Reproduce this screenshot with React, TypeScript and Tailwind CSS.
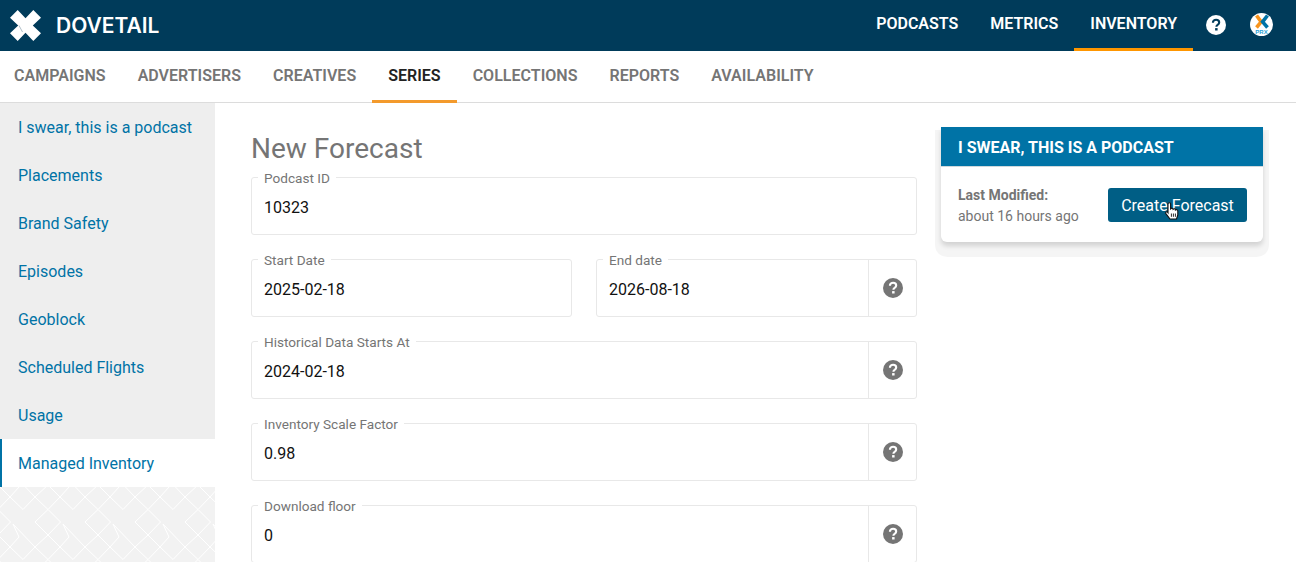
const topLinks = [
  { label: "PODCASTS", active: false },
  { label: "METRICS", active: false },
  { label: "INVENTORY", active: true },
];

const subLinks = ["CAMPAIGNS", "ADVERTISERS", "CREATIVES", "SERIES", "COLLECTIONS", "REPORTS", "AVAILABILITY"];

const sideLinks = [
  "I swear, this is a podcast",
  "Placements",
  "Brand Safety",
  "Episodes",
  "Geoblock",
  "Scheduled Flights",
  "Usage",
  "Managed Inventory",
];

const Logo = () => (
  <svg width="31" height="31" viewBox="0 0 31 31" className="shrink-0">
    <path
      fill="#fff"
      d="M0 7.7 L7.7 0 L15.5 8.2 L23.3 0 L31 7.7 L22.8 15.5 L31 23.3 L23.3 31 L15.5 22.8 L7.7 31 L0 23.3 L8.2 15.5 Z"
    />
    <path stroke="#8fa5b2" strokeWidth="0.7" d="M9 15.5 L12.5 22" fill="none" />
  </svg>
);

const HelpIcon = ({ bg, fg, size }: { bg: string; fg: string; size: number }) => (
  <svg width={size} height={size} viewBox="0 0 20 20">
    <circle cx="10" cy="10" r="10" fill={bg} />
    <path
      d="M6.9 7.7 C6.9 5.8 8.3 4.7 10.1 4.7 C11.9 4.7 13.2 5.8 13.2 7.4 C13.2 8.6 12.5 9.2 11.6 9.8 C10.8 10.3 10.4 10.7 10.4 11.8"
      fill="none"
      stroke={fg}
      strokeWidth="2.1"
    />
    <rect x="9.1" y="13.1" width="2.5" height="2.4" fill={fg} />
  </svg>
);

const PrxAvatar = () => (
  <svg width="23" height="23" viewBox="0 0 23 23">
    <circle cx="11.5" cy="11.5" r="11.5" fill="#fff" />
    <path d="M6.5 2.5 L11.2 8.8 L6.5 14.5" fill="none" stroke="#f7941d" strokeWidth="3.6" />
    <path d="M17.5 2.5 L12.6 8.8 L17.5 14.5" fill="none" stroke="#0073a6" strokeWidth="3.6" />
    <text
      x="11.5"
      y="21"
      textAnchor="middle"
      fontFamily="'Liberation Sans', sans-serif"
      fontWeight="700"
      fontSize="6"
      fill="#2a9fd6"
    >
      PRX
    </text>
  </svg>
);

const HandCursor = () => (
  <svg width="14" height="18" viewBox="0 0 14 18" className="absolute left-[57px] top-[14px]">
    <path
      d="M3 2 C3 0.4 5.6 0.4 5.6 2 L5.6 6.8 C6.6 5.8 7.9 6 8.1 7.3 C9 6.4 10.3 6.7 10.4 8 C11.3 7.3 12.8 7.7 12.8 9 L12.8 13 L11.5 17 L5 17 L0.9 11.6 C0.1 10.4 1.6 9.2 2.6 10.2 L3 10.8 Z"
      fill="#fff"
      stroke="#111"
      strokeWidth="1.1"
    />
    <path d="M6.4 11.5 V14.8 M8.4 11.5 V14.8 M10.4 11.5 V14.8" stroke="#111" strokeWidth="0.9" />
  </svg>
);

// one 50x50 tile of the chain-link texture, drawn again for the parts that wrap
const tileLines =
  "M10 10 L23 22.5 L35 10 L48 22.5 L60 10 M48 22.5 L35 35 L48 48 L60.5 35 Z M48 48 L35 60 M48 48 L60 60 M13 37 L19 50 L10 60 M13 37 L35 60";

const SidePattern = () => (
  <svg className="block h-full w-full" xmlns="http://www.w3.org/2000/svg">
    <defs>
      <pattern id="dove" width="50" height="50" patternUnits="userSpaceOnUse">
        {[
          [0, 0],
          [-50, 0],
          [0, -50],
          [-50, -50],
        ].map(([x, y]) => (
          <path
            key={`${x}${y}`}
            d={tileLines}
            transform={`translate(${x} ${y})`}
            fill="none"
            stroke="#fff"
            strokeWidth="1"
          />
        ))}
      </pattern>
    </defs>
    <rect width="100%" height="100%" fill="url(#dove)" />
  </svg>
);

const Field = ({
  label,
  value,
  help,
  className,
}: {
  label: string;
  value: string;
  help?: boolean;
  className?: string;
}) => (
  <div className={`relative flex h-[58px] rounded-[3px] border border-[#e8e8e8] ${className ?? ""}`}>
    <span className="absolute left-[6px] top-[-9px] bg-white px-[6px] text-[13.6px] leading-[18px] text-[#757575]">
      {label}
    </span>
    <div className="flex flex-1 items-center pl-3 pt-[3px] text-base text-[#111]">{value}</div>
    {help && (
      <div className="flex w-[48px] items-center justify-center border-l border-[#e8e8e8]">
        <HelpIcon bg="#757575" fg="#fff" size={20} />
      </div>
    )}
  </div>
);

export default function App() {
  return (
    <div className="flex h-[562px] flex-col overflow-hidden bg-white font-['Roboto',sans-serif]">
      <header className="flex h-[51px] shrink-0 items-center justify-between bg-[#003b5a] pl-[10px] pr-[23px]">
        <div className="flex items-center gap-[15px]">
          <Logo />
          <span className="font-['Inter',sans-serif] text-[21px] font-semibold text-white">DOVETAIL</span>
        </div>
        <nav className="flex h-full items-center">
          {topLinks.map((link) => (
            <a
              key={link.label}
              className={`flex h-full items-center border-b-[3px] px-4 pb-px text-base font-semibold text-white ${
                link.active ? "border-[#ff9600]" : "border-transparent"
              }`}
            >
              {link.label}
            </a>
          ))}
          <div className="ml-[13px] mr-[24px] -mt-[2px]">
            <HelpIcon bg="#fff" fg="#003b5a" size={20} />
          </div>
          <div className="-mt-[3px] h-[23px]">
            <PrxAvatar />
          </div>
        </nav>
      </header>

      <nav className="flex h-[52px] shrink-0 items-center border-b border-[#dcdcdc] bg-white">
        {subLinks.map((link) => (
          <a
            key={link}
            className={`flex h-full items-center border-b-[3px] px-4 pt-px text-base font-semibold tracking-[0.02px] first:pl-[14px] ${
              link === "SERIES" ? "-mb-px border-[#f39a2c] text-[#222]" : "border-transparent text-[#757575]"
            }`}
          >
            {link}
          </a>
        ))}
      </nav>

      <div className="flex min-h-0 flex-1">
        <aside className="flex w-[215px] shrink-0 flex-col bg-[#f2f2f2]">
          {sideLinks.map((link) =>
            link === "Managed Inventory" ? (
              <a
                key={link}
                className="flex h-12 shrink-0 items-center border-l-2 border-[#0073a6] bg-white pl-4 pt-[2px] text-base text-[#0073a6]"
              >
                {link}
              </a>
            ) : (
              <a
                key={link}
                className="flex h-12 shrink-0 items-center bg-[#eeeeee] pl-[18px] pt-[2px] text-base text-[#0073a6]"
              >
                {link}
              </a>
            ),
          )}
          <div className="min-h-0 flex-1">
            <SidePattern />
          </div>
        </aside>

        <main className="flex min-w-0 flex-1 gap-6 pl-9 pt-6">
          <section className="w-[666px] shrink-0">
            <h1 className="mb-2 pt-[2px] text-[28px] leading-[40px] text-[#757575]">New Forecast</h1>
            <div className="flex flex-col gap-6">
              <Field label="Podcast ID" value="10323" />
              <div className="flex gap-6">
                <Field label="Start Date" value="2025-02-18" className="flex-1" />
                <Field label="End date" value="2026-08-18" help className="flex-1" />
              </div>
              <Field label="Historical Data Starts At" value="2024-02-18" help />
              <Field label="Inventory Scale Factor" value="0.98" help />
              <Field label="Download floor" value="0" help />
            </div>
          </section>

          <aside className="h-[115px] w-[322px] shrink-0 rounded-b-[6px] bg-white shadow-[0_4px_5px_rgba(0,0,0,0.14),0_9px_0_6px_rgba(0,0,0,0.04)]">
            <h2 className="flex h-10 items-center border-b border-[#cfd8dc] bg-[#0073a6] pl-[17px] pt-[3px] text-base font-bold text-white">
              I SWEAR, THIS IS A PODCAST
            </h2>
            <div className="flex items-center justify-between pl-[17px] pr-4 pt-4">
              <div className="pt-[2px] text-sm leading-[21px] text-[#757575]">
                <div className="font-bold">Last Modified:</div>
                <div>about 16 hours ago</div>
              </div>
              <button className="relative h-[34px] w-[139px] rounded-[3px] bg-[#005e85] pt-px text-base text-white">
                Create Forecast
                <HandCursor />
              </button>
            </div>
          </aside>
        </main>
      </div>
    </div>
  );
}
